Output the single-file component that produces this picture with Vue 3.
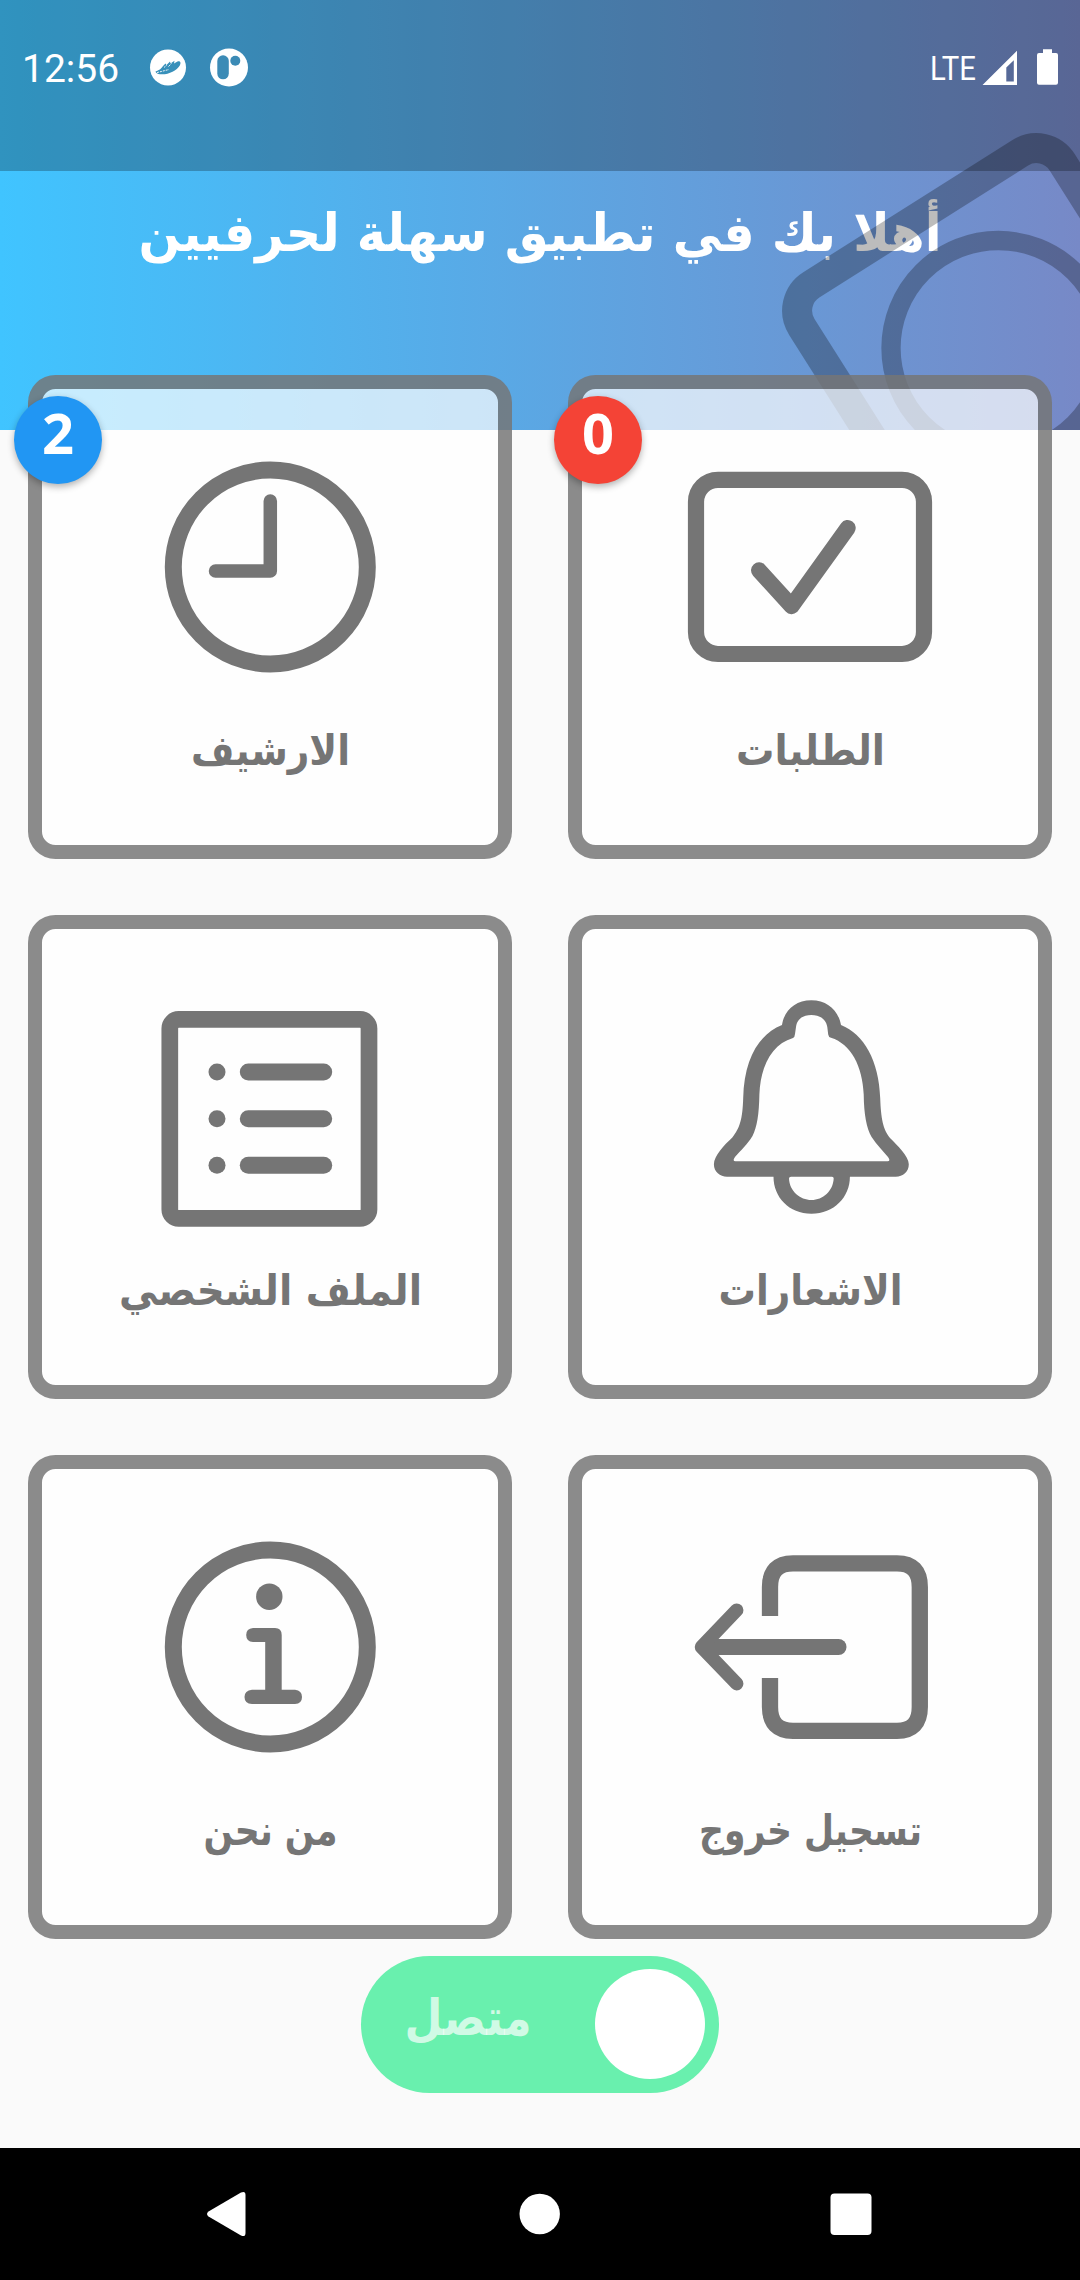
<template>
  <div class="screen">
    <div class="header-bg"></div>

    <div class="status-bar">
      <div class="status-side">
        <span class="clock">12:56</span>
        <svg class="notif-icon" viewBox="0 0 40 40">
          <circle cx="20" cy="19.500" r="18" fill="#fff" />
          <path
            d="M7.500 23.500C12 22 13 20.500 15 18L17.500 15.500L18.500 17L22 13.500L22.500 15.500L26.500 12.800L26 15.500L29.500 13.600C32 12.400 33.500 14.500 31.800 17.500C28.500 23 20 27 12 26.200C9.500 26 7.800 25 7.500 23.500Z"
            fill="#3890ba"
          />
          <path d="M9 24.600L21 21.500M16 19.500L19 16.800M20.500 18.500L23.500 15.500" stroke="#fff" stroke-width="0.900" stroke-dasharray="2 1" fill="none" />
        </svg>
        <svg class="notif-icon" viewBox="0 0 40 40">
          <circle cx="20" cy="19.500" r="19" fill="#fff" />
          <rect x="8.300" y="7.300" width="11.500" height="24" rx="5.700" fill="#3b8bb6" />
          <circle cx="26.300" cy="12.800" r="5" fill="#3b8bb6" />
        </svg>
      </div>
      <svg class="status-right" viewBox="0 0 130 40">
        <text x="0" y="32" textLength="46" lengthAdjust="spacingAndGlyphs" class="lte">LTE</text>
        <path d="M52.500 37L87 2.700V37ZM76.300 19.500V33.500H83.800V12.300Z" fill="#fff" fill-rule="evenodd" />
        <path d="M113 1.300H122V5H126Q128 5 128 7V34.700Q128 36.700 126 36.700H109Q107 36.700 107 34.700V7Q107 5 109 5H113Z" fill="#fff" />
      </svg>
    </div>

    <svg class="title" viewBox="0 0 1080 120">
      <text x="540" y="80" textLength="803" lengthAdjust="spacingAndGlyphs" text-anchor="middle">أهلا بك في تطبيق سهلة لحرفيين</text>
    </svg>

    <!-- tilted decoration clipped by the header -->
    <svg class="deco" viewBox="0 0 1080 429.500">
      <g fill="none" stroke="#000">
        <rect x="844" y="195" width="308" height="308" rx="30.500" stroke-width="30" transform="rotate(-32.300 998 349)" />
        <circle cx="998.500" cy="348" r="107.500" stroke-width="19.300" />
      </g>
    </svg>

    <main class="grid" dir="rtl">
      <div v-for="item in items" :key="item.id" class="card">
        <span v-if="item.badge" class="badge" :class="item.badgeColor">{{ item.badge }}</span>
        <svg class="icon" viewBox="0 0 260 260">
          <template v-if="item.id === 'orders'">
            <rect class="line" x="16" y="42.800" width="228" height="174.200" rx="22" stroke-width="16.200" />
            <path class="line round" d="M79 133.300L111.600 169.200L167.700 91" stroke-width="16" />
          </template>
          <template v-else-if="item.id === 'archive'">
            <circle class="line" cx="130.300" cy="130" r="97" stroke-width="17" />
            <path class="line round" d="M130.300 64V134H75.500" stroke-width="13.500" />
          </template>
          <template v-else-if="item.id === 'notifications'">
            <path :d="bellPath" fill="#757575" fill-rule="evenodd" />
          </template>
          <template v-else-if="item.id === 'profile'">
            <rect class="line" x="29.800" y="42.400" width="199.200" height="199" rx="9" stroke-width="16.700" />
            <template v-for="y in [95, 141.700, 188.200]" :key="y">
              <circle cx="77" :cy="y" r="8.500" fill="#757575" />
              <path class="line round" :d="`M108.300 ${y}H183.700`" stroke-width="17" />
            </template>
          </template>
          <template v-else-if="item.id === 'logout'">
            <path
              class="line"
              d="M90 99V70Q90 46.300 113 46.300H217Q239.800 46.300 239.800 70V190Q239.800 213.800 217 213.800H113Q90 213.800 90 190V161"
              stroke-width="16.300"
            />
            <path class="line round" d="M28 130H158.500" stroke-width="16" />
            <path class="line round" d="M56.700 93.200L21.500 130L56.700 166.700" stroke-width="13.500" />
          </template>
          <template v-else>
            <circle class="line" cx="130.300" cy="130" r="97" stroke-width="17" />
            <circle cx="129.300" cy="79.700" r="13.200" fill="#757575" />
            <path
              d="M113 111H135Q141.700 111 141.700 118V172.700H155Q162 173.500 162 179.900Q162 186.500 155 187H112Q104.500 186.500 104.500 179.900Q104.500 173.500 112 172.700H125.200V125H113Q106.200 124.500 106.200 118Q106.200 111.500 113 111Z"
              fill="#757575"
            />
          </template>
        </svg>
        <svg class="label" viewBox="0 0 400 80">
          <text x="200.500" y="50" :textLength="item.width" lengthAdjust="spacingAndGlyphs" text-anchor="middle">{{ item.label }}</text>
        </svg>
      </div>
    </main>

    <button class="toggle" :class="{ off: !online }" @click="online = !online">
      <svg class="toggle-text" viewBox="0 0 160 100">
        <text x="80" y="61" textLength="127" lengthAdjust="spacingAndGlyphs" text-anchor="middle">متصل</text>
      </svg>
      <span class="knob"></span>
    </button>

    <nav class="nav-bar">
      <svg viewBox="0 0 50 50"><path d="M7.500 22.500L40 3.500Q44.500 1.500 44.500 6V44Q44.500 48.500 40 46.500L7.500 27.500Q4.500 25 7.500 22.500Z" fill="#fff" /></svg>
      <svg viewBox="0 0 50 50"><circle cx="26.700" cy="25" r="20.200" fill="#fff" /></svg>
      <svg viewBox="0 0 50 50"><rect x="4.500" y="4.500" width="41" height="41.500" rx="4" fill="#fff" /></svg>
    </nav>
  </div>
</template>

<script setup>
import { ref } from 'vue';

const online = ref(true);

const items = [
  { id: 'orders', label: 'الطلبات', width: 149, badge: '0', badgeColor: 'red' },
  { id: 'archive', label: 'الارشيف', width: 159, badge: '2', badgeColor: 'blue' },
  { id: 'notifications', label: 'الاشعارات', width: 184 },
  { id: 'profile', label: 'الملف الشخصي', width: 303 },
  { id: 'logout', label: 'تسجيل خروج', width: 223 },
  { id: 'about', label: 'من نحن', width: 134 }
];

// Bell body outline, its inside, then the clapper
const bellPath = [
  'M102 48C104 34 115 23.300 131.300 23.300S158.500 34 161 48C184 57 199 84 200.200 121C201 142 203 152 210 161C217 168 228.800 179 228.800 187.300C228.800 195 223 199.700 215.700 199.700',
  'H169.900C169.900 220 154 236.700 131.500 236.700S93.500 220 93.500 199.700H47C40 199.700 33.900 195 33.900 187.300C33.900 179 44 168 52.100 160.700C60 151 62.500 142 63.200 121C64 82 79 57 102 48Z',
  'M116 50C117 42 123 38 131.300 38S146 42 147.300 50L148.200 57.500Q148.400 60 151 60.700C171 67 182.500 89 183.700 117.300C184 138 186.500 151 191.600 160C197 168 203 174 208 180Q211 184.300 207.500 184.300H55.500Q52 184 55 180C61 173 67 168 72.500 159C77 150 79 138 79.400 117.300C80.500 89 92 67 113 61Q114.800 60 115 57Z',
  'M109 201.500Q109 199.700 111 199.700H152Q153.700 199.700 153.700 201.500C153 214 143 223 131.500 223S109.500 214 109 201.500Z'
].join('');
</script>

<style>
body {
  margin: 0;
  background: #fafafa;
}
</style>

<style scoped>
.screen {
  position: relative;
  display: flex;
  flex-direction: column;
  width: 1080px;
  height: 2280px;
  overflow: hidden;
  background: #fafafa;
  font-family: Roboto, 'DejaVu Sans', sans-serif;
}

.header-bg {
  position: absolute;
  top: 0;
  left: 0;
  width: 100%;
  height: 429.500px;
  background: linear-gradient(to right, #40c4ff, #7789c7);
}

.status-bar {
  position: relative;
  display: flex;
  justify-content: space-between;
  box-sizing: border-box;
  height: 171px;
  padding: 48px 20px 0 22px;
  background: rgba(0, 0, 0, 0.25);
}

.status-side {
  display: flex;
  height: 40px;
}

.clock {
  width: 126px;
  color: #fff;
  font-size: 39px;
  line-height: 42px;
}

.notif-icon {
  width: 40px;
  height: 40px;
  margin-right: 21px;
}

.status-right {
  width: 130px;
  height: 40px;
}

.lte {
  fill: #fff;
  font-family: Roboto, sans-serif;
  font-size: 34px;
}

.title {
  position: relative;
  flex: none;
  width: 1080px;
  height: 120px;
}

.title text {
  fill: #fff;
  font-family: 'DejaVu Sans', sans-serif;
  font-size: 52px;
  font-weight: 700;
}

.deco {
  position: absolute;
  top: 0;
  left: 0;
  width: 1080px;
  height: 429.500px;
  overflow: hidden;
  opacity: 0.260;
}

.grid {
  position: relative;
  display: grid;
  grid-template-columns: 484px 484px;
  grid-auto-rows: 484px;
  gap: 56px;
  padding: 84px 28px 0;
}

.card {
  position: relative;
  display: flex;
  flex-direction: column;
  align-items: center;
  box-sizing: border-box;
  padding-top: 47.500px;
  border: 14px solid rgba(0, 0, 0, 0.450);
  border-radius: 27.500px;
  background: rgba(255, 255, 255, 0.700);
}

.badge {
  position: absolute;
  top: 7px;
  left: -28px;
  width: 88px;
  height: 88px;
  border-radius: 50%;
  box-shadow: 0 3px 7px rgba(0, 0, 0, 0.300);
  color: #fff;
  font-family: 'Noto Sans', sans-serif;
  font-size: 56px;
  font-weight: 700;
  line-height: 72px;
  text-align: center;
}

.badge.red {
  background: #f44336;
}

.badge.blue {
  background: #2196f3;
}

.icon {
  width: 260px;
  height: 260px;
}

.line {
  fill: none;
  stroke: #757575;
}

.round {
  stroke-linecap: round;
  stroke-linejoin: round;
}

.label {
  width: 400px;
  height: 80px;
  margin-top: 18px;
}

.label text {
  fill: #757575;
  font-family: 'DejaVu Sans', sans-serif;
  font-size: 42px;
  font-weight: 700;
}

.toggle {
  display: flex;
  align-items: center;
  justify-content: space-between;
  align-self: center;
  flex: none;
  box-sizing: border-box;
  width: 358px;
  height: 137.500px;
  margin-top: 16.500px;
  padding: 0 14px 0 27px;
  border: 0;
  border-radius: 69px;
  background: #69f0ae;
}

.toggle.off {
  background: #bdbdbd;
}

.toggle-text {
  width: 160px;
  height: 100px;
  overflow: visible;
}

.toggle-text text {
  fill: rgba(255, 255, 255, 0.700);
  font-family: 'DejaVu Sans', sans-serif;
  font-size: 50px;
  font-weight: 700;
}

.knob {
  width: 110px;
  height: 110px;
  border-radius: 50%;
  background: #fff;
}

.nav-bar {
  display: flex;
  align-items: center;
  justify-content: space-between;
  box-sizing: border-box;
  height: 132px;
  margin-top: auto;
  padding: 0 204.500px 0 201px;
  background: #000;
}

.nav-bar svg {
  width: 50px;
  height: 50px;
}
</style>
